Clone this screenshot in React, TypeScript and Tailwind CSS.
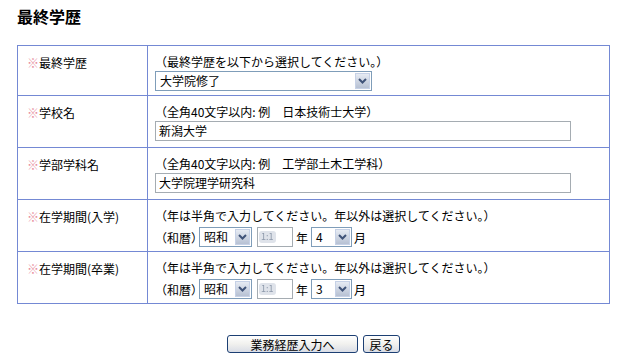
import React from 'react';

const cell = 'border border-[#7489d4] align-top';

function Arrow() {
  return (
    <span className="m-px flex w-[15px] items-center justify-center border border-[#c6d1e6] bg-gradient-to-b from-[#e6ebf3] to-[#b7c1d3]">
      <svg width="9" height="6" viewBox="0 0 9 6">
        <path d="M1 1l3.5 3.5L8 1" stroke="#3f5378" strokeWidth="2" fill="none" />
      </svg>
    </span>
  );
}

function Select({ value, width }: { value: string; width: string }) {
  return (
    <div className={`flex h-[20px] items-stretch border border-[#7f9db9] bg-white ${width}`}>
      <span className="flex-1 pl-[4px] leading-[18px]">{value}</span>
      <Arrow />
    </div>
  );
}

function TextBox({ value }: { value: string }) {
  return (
    <div className="h-[20px] w-[416px] border border-[#a5acb2] bg-white pl-[3px] leading-[18px]">{value}</div>
  );
}

function Era({ month }: { month: string }) {
  return (
    <div className="mt-[4px] flex h-[20px] items-center">
      <span className="w-[44px]">（和暦）</span>
      <Select value="昭和" width="w-[53px]" />
      <div className="ml-[5px] flex h-[20px] w-[36px] items-center border border-[#a5acb2] bg-white pl-[1px]">
        <span className="rounded-[3px] bg-[#dfe3ea] px-[2px] text-[9px] leading-[12px] text-[#8d98aa] blur-[0.6px]">1:1</span>
      </div>
      <span className="ml-[3px]">年</span>
      <span className="ml-[3px]">
        <Select value={month} width="w-[41px]" />
      </span>
      <span className="ml-[2px]">月</span>
    </div>
  );
}

const rows = [
  {
    label: '最終学歴',
    hint: '（最終学歴を以下から選択してください。）',
    body: <div className="mt-[2px]"><Select value="大学院修了" width="w-[217px]" /></div>,
    h: 'h-[50px]',
  },
  {
    label: '学校名',
    hint: '（全角40文字以内: 例　日本技術士大学）',
    body: <div className="mt-[2px]"><TextBox value="新潟大学" /></div>,
    h: 'h-[52px]',
  },
  {
    label: '学部学科名',
    hint: '（全角40文字以内: 例　工学部土木工学科）',
    body: <div className="mt-[2px]"><TextBox value="大学院理学研究科" /></div>,
    h: 'h-[52px]',
  },
  {
    label: '在学期間(入学)',
    hint: '（年は半角で入力してください。年以外は選択してください。）',
    body: <Era month="4" />,
    h: 'h-[52px]',
  },
  {
    label: '在学期間(卒業)',
    hint: '（年は半角で入力してください。年以外は選択してください。）',
    body: <Era month="3" />,
    h: 'h-[52px]',
  },
];

export default function App() {
  return (
    <div className="h-[356px] w-[633px] bg-white pl-[17px] pt-[6px] font-['Noto_Sans_CJK_JP',sans-serif] text-[12px] leading-[15px] text-black">
      <h1 className="text-[16px] font-bold leading-[20px]">最終学歴</h1>

      <table className="mt-[19px] w-[593px] border-collapse">
        <tbody>
          {rows.map((r) => (
            <tr key={r.label} className={r.h}>
              <td className={`${cell} w-[130px] pl-[9px] pt-[9px]`}>
                <span className="text-[#e8919f]">※</span>
                {r.label}
              </td>
              <td className={`${cell} pl-[7px] pt-[8px]`}>
                <div>{r.hint}</div>
                {r.body}
              </td>
            </tr>
          ))}
        </tbody>
      </table>

      <div className="mt-[31px] flex w-[593px] justify-center gap-[5px]">
        <button className="h-[18px] w-[131px] rounded-[3px] border border-[#1c3f73] bg-gradient-to-b from-white via-[#f1f1ee] to-[#d9dde6] text-[12px] leading-[15px]">
          業務経歴入力へ
        </button>
        <button className="h-[18px] w-[37px] rounded-[3px] border border-[#1c3f73] bg-gradient-to-b from-white via-[#f1f1ee] to-[#d9dde6] text-[12px] leading-[15px]">
          戻る
        </button>
      </div>
    </div>
  );
}
